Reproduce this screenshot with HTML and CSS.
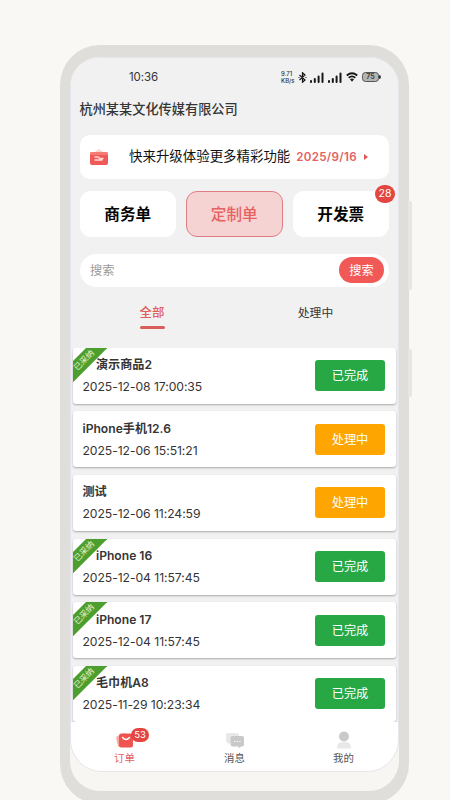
FILE: index.html
```html
<!DOCTYPE html>
<html lang="zh-CN">
<head>
<meta charset="utf-8">
<title>订单</title>
<link rel="stylesheet" href="styles.css">
</head>
<body>
<div class="phone">
  <i class="side-key volume"></i><i class="side-key power"></i>
  <div class="bezel">
    <div class="screen">
      <header class="status">
        <span class="clock">10:36</span>
        <div class="indicators">
          <span class="speed"><span>9.71</span><span>KB/s</span></span>
          <svg class="bt" viewBox="0 0 9 11"><path d="M1.5 3 7 8 4.5 10.3V.7L7 3 1.5 8M.5 5.5h1M7.5 5.5h1"/></svg>
          <svg class="signal" viewBox="0 0 14 11"><path d="M1 9v1M4.800 7v3M8.600 4.500v5.500M12.500 1.500v8.500"/></svg>
          <svg class="signal" viewBox="0 0 14 11"><path d="M1 9v1M4.800 7v3M8.600 4.500v5.500M12.500 1.500v8.500"/></svg>
          <svg class="wifi" viewBox="0 0 12 10"><path d="M.8 3.500Q6-.9 11.200 3.500M2.700 5.800Q6 3 9.300 5.800"/><path class="dot" d="M4 7.300Q6 5.800 8 7.300L6 9.700Z"/></svg>
          <span class="battery">75</span>
        </div>
      </header>
      <h1 class="company">杭州某某文化传媒有限公司</h1>
      <section class="banner">
        <svg class="wallet" viewBox="0 0 20 18"><path d="M3 6 10 1l7 5z" fill="#fbd5cf"/><rect x="1" y="4" width="18" height="13" rx="2" fill="#ef5958"/><path d="M1 6q0-2 2-2h14q2 0 2 2v1H1z" fill="#f47c72"/><path d="M5.500 9h3.500l2 1.500h3.500M5.500 12h8" stroke="#ffd9d4" stroke-width="1.300" fill="none"/></svg>
        <span class="promo">快来升级体验更多精彩功能</span>
        <span class="expiry">2025/9/16</span>
        <i class="arrow"></i>
      </section>
      <section class="types">
        <div class="type">商务单</div>
        <div class="type active">定制单</div>
        <div class="type">开发票<b class="badge">28</b></div>
      </section>
      <section class="search"><span>搜索</span><button class="go">搜索</button></section>
      <nav class="filters"><span class="filter on">全部</span><span class="filter">处理中</span></nav>
      <main class="orders">
        <article class="order adopted"><div class="ribbon"><span>已采纳</span></div><div class="info"><h2>演示商品2</h2><time>2025-12-08 17:00:35</time></div><span class="state done">已完成</span></article>
        <article class="order"><div class="info"><h2>iPhone手机12.6</h2><time>2025-12-06 15:51:21</time></div><span class="state pending">处理中</span></article>
        <article class="order"><div class="info"><h2>测试</h2><time>2025-12-06 11:24:59</time></div><span class="state pending">处理中</span></article>
        <article class="order adopted"><div class="ribbon"><span>已采纳</span></div><div class="info"><h2>iPhone 16</h2><time>2025-12-04 11:57:45</time></div><span class="state done">已完成</span></article>
        <article class="order adopted"><div class="ribbon"><span>已采纳</span></div><div class="info"><h2>iPhone 17</h2><time>2025-12-04 11:57:45</time></div><span class="state done">已完成</span></article>
        <article class="order adopted"><div class="ribbon"><span>已采纳</span></div><div class="info"><h2>毛巾机A8</h2><time>2025-11-29 10:23:34</time></div><span class="state done">已完成</span></article>
      </main>
      <footer class="tabbar">
        <div class="tab current">
          <svg viewBox="0 0 20 18"><path d="M2.500 5 10 2v14H4.500Q3 16 2.700 14L1.300 8Q1 5.600 2.500 5z" fill="#f9aaa3"/><rect x="4" y="2.500" width="14" height="14" rx="2.500" fill="#f05451"/><path d="M7.500 6.500q3.500 4 7 0" stroke="#fff" stroke-width="1.400" fill="none" stroke-linecap="round"/></svg>
          <b class="badge small">53</b><span>订单</span>
        </div>
        <div class="tab">
          <svg viewBox="0 0 20 18"><path d="M3 2h9q2 0 2 2v8H5l-2 2V12Q1 12 1 10V4q0-2 2-2z" fill="#e8e8e8"/><path d="M7.500 5h9.500q2 0 2 2v6.500q0 2-2 2h-1l-1.500 1.500-1.500-1.500H7.500q-2 0-2-2V7q0-2 2-2z" fill="#c9c9c9"/><path d="M9 10.500h1.200M11.700 10.500h1.200M14.400 10.500h1.200" stroke="#fff" stroke-width="1.200"/></svg>
          <span>消息</span>
        </div>
        <div class="tab">
          <svg viewBox="0 0 20 18"><path d="M3 17.500Q3 11 8 11h4q5 0 5 6.500z" fill="#e8e8e8"/><circle cx="10" cy="5.500" r="5" fill="#c9c9c9"/></svg>
          <span>我的</span>
        </div>
      </footer>
    </div>
  </div>
</div>
</body>
</html>
```
FILE: styles.css
```css
* { box-sizing: border-box; }
html, body { height: 100%; }
body { margin: 0; overflow: hidden; background: #f9f8f4; color: #353535; font-family: Inter, "Noto Sans CJK SC", sans-serif; }
h1, h2 { margin: 0; }
.phone { position: relative; width: 349px; height: 759px; margin: 45px 0 0 60px; padding: 12px 10px 13px; border-radius: 40px; background: #dfdeda; }
.side-key { position: absolute; left: 348px; width: 4px; background: #e7e6e2; border-radius: 0 2px 2px 0; }
.volume { top: 156px; height: 89px; }
.power { top: 304px; height: 48px; }
.bezel { height: 734px; border-radius: 30px; background: #f7f6f2; overflow: hidden; }
.screen { height: 715px; width: 329px; display: flex; flex-direction: column; overflow: hidden; border: 1px solid #e5e5eb; border-radius: 28px 28px 32px 32px; background: #f1f1f1; }
.status { height: 38px; flex: none; display: flex; justify-content: space-between; align-items: center; padding: 0 17px 0 58px; }
.clock { font-size: 11.500px; letter-spacing: -.1px; }
.indicators { display: flex; align-items: center; height: 13px; }
.speed { display: flex; flex-direction: column; width: 16px; margin-right: 1px; font-size: 6px; line-height: 7px; font-weight: 500; }
.indicators svg { fill: none; stroke: #171717; stroke-width: 1.2; }
.bt { width: 9px; height: 11px; margin-right: 3px; }
.indicators .signal { width: 14px; height: 11px; margin-right: 4px; stroke-width: 2; stroke-linecap: round; }
.wifi { width: 12px; height: 10px; margin-right: 4px; }
.indicators .wifi { stroke-width: 1.8; }
.indicators .dot { fill: #171717; stroke: none; }
.battery { position: relative; width: 17px; height: 10px; margin-right: 2px; border: 1px solid #555; border-radius: 3.5px; background: #b4b4b4; font-size: 7px; line-height: 8px; font-weight: 600; text-align: center; }
.battery::after { content: ""; position: absolute; left: 16px; top: 2px; width: 1.5px; height: 4px; background: #333; border-radius: 0 2px 2px 0; }
.company { flex: none; height: 38.500px; padding: 4px 9px 0 8.500px; font-size: 13.200px; line-height: 19px; font-weight: 500; }
.banner { flex: none; display: flex; align-items: center; height: 44.500px; margin: 0 9.500px 0 8.500px; padding: 0 19px 0 9.500px; border-radius: 10px; background: #fff; color: #111; }
.wallet { width: 20px; height: 18px; margin-right: 20px; }
.promo { font-size: 13.450px; line-height: 20px; padding-bottom: 1px; white-space: nowrap; }
.expiry { margin-left: 6px; color: #e26261; font-size: 11.600px; font-weight: 600; letter-spacing: .3px; }
.arrow { margin-left: 7px; border: 3px solid transparent; border-left: 4px solid #dc5755; border-right: 0; }
.types { flex: none; display: grid; grid-template-columns: repeat(3, 1fr); gap: 10px; height: 46px; margin: 12px 9px 0 8.500px; }
.type { position: relative; display: flex; align-items: center; justify-content: center; padding-bottom: 3px; border-radius: 11px; background: #fff; color: #050505; font-size: 15.600px; font-weight: 700; }
.type.active { border: 1px solid #df7d84; background: #f6d3d3; color: #e56261; font-weight: 500; }
.badge { position: absolute; top: -6px; right: -6px; width: 20px; height: 18px; border-radius: 9px; background: #e34540; color: #fff; font-size: 10.500px; line-height: 18px; font-weight: 400; text-align: center; }
.search { flex: none; display: flex; align-items: center; justify-content: space-between; height: 33px; margin: 16.500px 9.500px 0 8.500px; padding: 0 4.500px 0 10.500px; border-radius: 17px; background: #fff; color: #999; font-size: 12.200px; }
.go { width: 45px; height: 26px; padding: 0 0 1px; border: 0; border-radius: 13px; background: #f05956; color: #fff; font: 12.200px "Noto Sans CJK SC", sans-serif; }
.filters { flex: none; display: grid; grid-template-columns: 162px 1fr; height: 61px; padding-top: 17.500px; font-size: 11.800px; }
.filter { display: flex; flex-direction: column; align-items: center; line-height: 18px; }
.filter.on { color: #df5e5b; font-weight: 500; font-size: 12.400px; }
.filter.on::after { content: ""; width: 25px; height: 3.500px; margin-top: 3.500px; border-radius: 2px; background: #d85d5b; }
.orders { flex: 1; min-height: 0; display: flex; flex-direction: column; gap: 7.700px; padding: 0 2.500px 0 1.500px; overflow: hidden; }
.order { flex: none; position: relative; display: flex; justify-content: space-between; align-items: center; height: 56px; padding: 0 10.500px 0 10px; border-radius: 3px; background: #fff; box-shadow: 0 1px 2px #aaa; }
.info { height: 45px; }
.order h2 { height: 22px; line-height: 23px; font-size: 12.100px; font-weight: 600; white-space: nowrap; }
.adopted h2 { padding-left: 13.500px; }
.order time { display: block; font-size: 12.200px; line-height: 23px; letter-spacing: -.07px; white-space: nowrap; }
.state { display: grid; place-items: center; width: 70px; height: 31px; padding-bottom: 1px; border-radius: 3px; color: #fff; font-size: 12.200px; }
.done { background: #28a745; }
.pending { background: #ffa500; }
.ribbon { position: absolute; left: 0; top: 0; width: 34px; height: 35px; overflow: hidden; }
.ribbon span { position: absolute; left: -18.500px; top: 5px; width: 60px; height: 14.500px; background: #4c9f2f; color: #e8f5d8; transform: rotate(-45deg); text-align: center; font-size: 8.200px; line-height: 14px; }
.tabbar { flex: none; display: grid; grid-template-columns: repeat(3, 1fr); height: 49px; background: #fff; }
.tab { position: relative; display: flex; flex-direction: column; align-items: center; padding: 9px 0 0; color: #555; font-size: 10.400px; line-height: 17px; }
.tab svg { width: 20px; height: 18px; margin-bottom: 1px; }
.current { right: 1px; color: #e26261; }
.badge.small { left: 61px; top: 6px; width: 18px; height: 14px; border-radius: 7px; font-size: 9.500px; line-height: 14px; }
```
